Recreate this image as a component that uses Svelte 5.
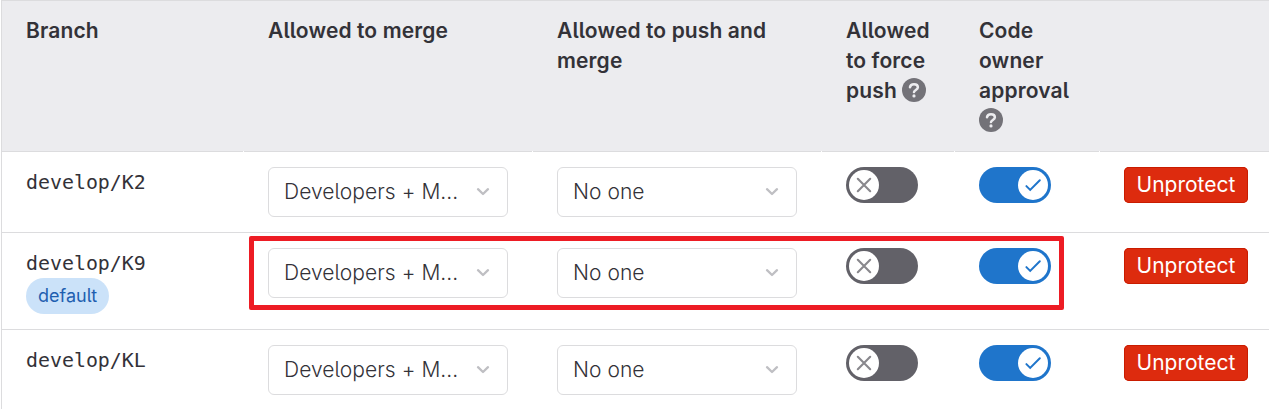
<script>
  const columns = [
    { label: 'Branch' },
    { label: 'Allowed to merge' },
    { label: 'Allowed to push and merge' },
    { label: 'Allowed to force push', help: true },
    { label: 'Code owner approval', help: true },
    { label: '' }
  ];
  const branches = [
    { name: 'develop/K2', merge: 'Developers + M...', push: 'No one' },
    { name: 'develop/K9', merge: 'Developers + M...', push: 'No one', isDefault: true },
    { name: 'develop/KL', merge: 'Developers + M...', push: 'No one' }
  ];
</script>

{#snippet dropdown(label)}
  <button class="select">
    <span>{label}</span>
    <svg width="14" height="10" viewBox="0 0 14 10" aria-hidden="true">
      <path d="M2 2.2 7 7 12 2.2" fill="none" stroke="#bfbfc3" stroke-width="2.3" stroke-linecap="round" stroke-linejoin="round" />
    </svg>
  </button>
{/snippet}

<div class="table">
  <div class="row head">
    {#each columns as col}
      <div class="cell">
        <span class="label">{col.label}</span>
        {#if col.help}
          <svg class="help" width="24" height="24" viewBox="0 0 24 24" aria-hidden="true">
            <circle cx="12" cy="12" r="12" fill="#737278" />
            <path d="M8 9.2C8.3 7.3 9.9 6.3 12 6.3c2.3 0 3.9 1.1 3.9 3 0 2.6-3.6 2.7-3.9 4.8" fill="none" stroke="#ececef" stroke-width="2.5" stroke-linecap="round" />
            <circle cx="12" cy="17.9" r="1.6" fill="#ececef" />
          </svg>
        {/if}
      </div>
    {/each}
  </div>

  {#each branches as branch}
    <div class="row">
      <div class="cell name">
        <code>{branch.name}</code>
        {#if branch.isDefault}<span class="badge">default</span>{/if}
      </div>
      <div class="cell">{@render dropdown(branch.merge)}</div>
      <div class="cell">{@render dropdown(branch.push)}</div>
      <div class="cell">
        <svg width="72" height="36" viewBox="0 0 72 36" aria-hidden="true">
          <rect width="72" height="36" rx="18" fill="#626168" />
          <circle cx="18" cy="18" r="15" fill="#fff" />
          <path d="M11.8 11.8 24.2 24.2M24.2 11.8 11.8 24.2" stroke="#89888d" stroke-width="2.1" stroke-linecap="round" />
        </svg>
      </div>
      <div class="cell">
        <svg width="72" height="36" viewBox="0 0 72 36" aria-hidden="true">
          <rect width="72" height="36" rx="18" fill="#1f75cb" />
          <circle cx="54" cy="18" r="15" fill="#fff" />
          <path d="M47.4 19.1 51.2 22.9 60.8 13.3" fill="none" stroke="#1f75cb" stroke-width="2" stroke-linecap="round" />
        </svg>
      </div>
      <div class="cell"><button class="danger">Unprotect</button></div>
    </div>
  {/each}
  <div class="highlight"></div>
</div>

<style>
  :global(body) {
    background: #fff;
    overflow: hidden;
  }
  .table {
    position: relative;
    box-sizing: border-box;
    height: 409px;
    margin-left: 1px;
    border: 1px solid #dcdcde;
    border-width: 1px 0 0 1px;
    overflow: hidden;
    font-family: Inter, sans-serif;
    font-feature-settings: 'cv05';
    color: #333238;
  }
  .row {
    display: grid;
    grid-template-columns: 242px 289px 289px 133px 145px 169px;
    border-bottom: 1px solid #dcdcde;
  }
  .cell {
    box-sizing: border-box;
    padding: 15px 0 15px 24px;
    line-height: 0;
  }
  .head {
    height: 151px;
    border-bottom: 0;
    background: #ececef;
  }
  .head .cell {
    padding: 15px 24px 0 24px;
    font-size: 21px;
    font-weight: 600;
    letter-spacing: 0.14px;
    line-height: 30px;
    background: linear-gradient(#dcdcde, #dcdcde) left bottom / calc(100% - 1px) 1px no-repeat,
      linear-gradient(#fff, #fff) left bottom / 100% 1px no-repeat;
  }
  .head .cell:last-child {
    background: linear-gradient(#dcdcde, #dcdcde) left bottom / 100% 1px no-repeat;
  }
  .label {
    word-spacing: -0.1px;
  }
  .help {
    display: inline-block;
    vertical-align: -4px;
  }
  .label + .help {
    margin-left: 0;
  }
  .name {
    display: flex;
    flex-direction: column;
    align-items: flex-start;
  }
  code {
    height: 30px;
    font-family: 'DejaVu Sans Mono', monospace;
    font-size: 19.9px;
    line-height: 32px;
  }
  .badge {
    height: 36px;
    box-sizing: border-box;
    padding: 0 12px;
    border-radius: 18px;
    background: #cbe2f9;
    color: #1f5fb0;
    font-size: 18px;
    line-height: 36px;
  }
  .select {
    display: flex;
    align-items: center;
    justify-content: space-between;
    box-sizing: border-box;
    width: 240px;
    height: 50px;
    padding: 0 17px 0 15px;
    border: 1px solid #dcdcde;
    border-radius: 6px;
    background: #fff;
    color: inherit;
    font: 350 21px/48px Inter, sans-serif;
    font-feature-settings: 'cv05';
    letter-spacing: 0.05px;
  }
  .danger {
    box-sizing: border-box;
    width: 124px;
    height: 36px;
    padding: 0;
    border: 0;
    border-radius: 5px;
    background: #dd2b0e;
    box-shadow: inset 0 0 0 1px #c91c00;
    color: #fff;
    font: 400 21px/36px Inter, sans-serif;
    font-feature-settings: 'cv05';
  }
  .highlight {
    position: absolute;
    left: 247px;
    top: 235px;
    box-sizing: border-box;
    width: 815px;
    height: 74px;
    border: 5px solid #ed1c24;
    border-radius: 2px;
  }
</style>
